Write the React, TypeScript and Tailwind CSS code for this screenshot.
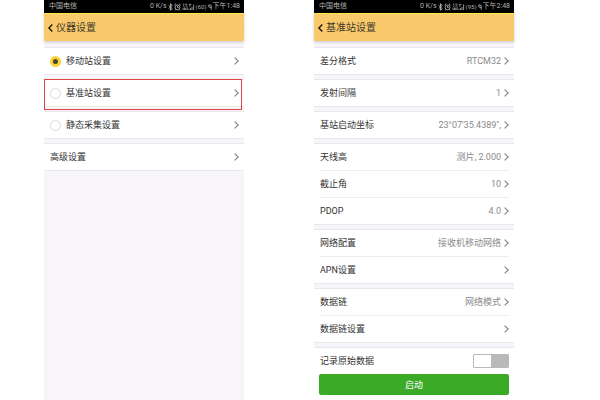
import { useState } from 'react';
import type { ReactNode } from 'react';

interface PhoneProps {
  time: string;
  battery: string;
  title: string;
  children: ReactNode;
}

interface RowProps {
  label: string;
  value?: string;
}

const MODES = ['移动站设置', '基准站设置', '静态采集设置'];

const GROUPS: RowProps[][] = [
  [{ label: '差分格式', value: 'RTCM32' }],
  [{ label: '发射间隔', value: '1' }],
  [{ label: '基站启动坐标', value: '23°07\'35.4389",' }],
  [
    { label: '天线高', value: '测片, 2.000' },
    { label: '截止角', value: '10' },
    { label: 'PDOP', value: '4.0' },
  ],
  [{ label: '网络配置', value: '接收机移动网络' }, { label: 'APN设置' }],
  [{ label: '数据链', value: '网络模式' }, { label: '数据链设置' }],
];

function Chevron() {
  return (
    <svg className="h-2 w-[5px] shrink-0" viewBox="0 0 5 8" fill="none" stroke="#7d7d7d" strokeWidth="1.1" aria-hidden="true">
      <path d="M0.6 0.6 4.3 4 0.6 7.4" />
    </svg>
  );
}

function StatusBar({ time, battery }: { time: string; battery: string }) {
  return (
    <div className="flex h-[13px] items-center justify-between bg-black pl-[5px] pr-1 text-[7px] leading-[13px] text-[#b5b5b5]">
      <span>中国电信</span>
      <div className="flex items-center gap-px whitespace-nowrap">
        <span>0 K/s</span>
        <svg className="h-2 w-[5px]" viewBox="0 0 5 8" fill="none" stroke="currentColor" strokeWidth="0.9" aria-hidden="true">
          <path d="M0.6 2.3 4.3 5.6 2.5 7.3V0.7L4.3 2.4 0.6 5.7" />
        </svg>
        <svg className="h-2 w-[7px]" viewBox="0 0 7 8" fill="none" stroke="currentColor" strokeWidth="0.9" aria-hidden="true">
          <circle cx="3.5" cy="4.4" r="2.4" />
          <path d="M3.5 3v1.5h1.2M0.5 2 2 0.8M6.5 2 5 0.8M1.8 6.4 1 7.4M5.2 6.4 6 7.4" />
        </svg>
        <svg className="h-2 w-[13px]" viewBox="0 0 13 8" fill="none" stroke="currentColor" strokeWidth="0.8" aria-hidden="true">
          <path d="M1 1.2h1.4M3.4 1.2h2M1 3h1.4M3.4 3h2M1 7V4.8M2.4 7V4.4M3.8 7V4.8M5.2 7V4.2" />
          <path d="M7 7V5.8M8.5 7V5M10 7V4M11.6 7V1.4M7 1.4h2.4M7 3h1.6" />
        </svg>
        <span className="text-[6px]">({battery})</span>
        <svg className="h-2 w-1" viewBox="0 0 4 8" fill="none" stroke="currentColor" strokeWidth="0.8" aria-hidden="true">
          <path d="M3.2 6.8V2.4L0.8 1.8V4L3.2 4.6" />
        </svg>
        <span>{time}</span>
      </div>
    </div>
  );
}

function Phone({ time, battery, title, children }: PhoneProps) {
  return (
    <section className="flex min-h-screen min-w-0 flex-1 flex-col bg-[#f7f5f9]">
      <StatusBar time={time} battery={battery} />
      <header className="flex h-7 items-center gap-[3px] border-t border-[#ffe83c] bg-[#f8ca6c] pl-1 shadow-[0_1px_3px_rgba(0,0,0,0.2)]">
        <button type="button" aria-label="返回">
          <svg className="h-2 w-[5px]" viewBox="0 0 5 8" fill="none" stroke="#1c1608" strokeWidth="1.4" aria-hidden="true">
            <path d="M4.3 0.6 0.9 4 4.3 7.4" />
          </svg>
        </button>
        <h1 className="text-[10px] leading-4 text-[#40372a]">{title}</h1>
      </header>
      <div className="flex flex-1 flex-col gap-1 pt-[6px]">{children}</div>
    </section>
  );
}

function Row({ label, value }: RowProps) {
  return (
    <button type="button" className="flex h-[26px] w-full items-center justify-between">
      <span>{label}</span>
      <span className="flex items-center gap-[3px] text-[#8a8a8a]">
        {value}
        <Chevron />
      </span>
    </button>
  );
}

export default function App() {
  const [mode, setMode] = useState(MODES[0]);

  return (
    <main className="flex min-h-screen gap-[70px] bg-white pl-11 pr-[86px] font-[Roboto,'Noto_Sans_CJK_SC',sans-serif] text-[9px] leading-3 text-[#333]">
      <Phone time="下午1:48" battery="60" title="仪器设置">
        {MODES.map((m) => (
          <div key={m} className="relative flex h-7 items-center border-y border-[#e8e7eb] bg-white pl-[6px] pr-[5px]">
            <label className="flex flex-1 items-center gap-[5px]">
              <input
                type="radio"
                name="mode"
                checked={mode === m}
                onChange={() => setMode(m)}
                className="size-[11px] appearance-none rounded-full border border-[#d9d9d9] bg-white checked:border-[3px] checked:border-[#fbd335] checked:bg-[#4a4433]"
              />
              {m}
            </label>
            <button type="button" aria-label={m}>
              <Chevron />
            </button>
            {m === '基准站设置' && (
              <span className="pointer-events-none absolute -bottom-1 -top-px left-0 right-[2px] z-10 border border-[#e0443c]" />
            )}
          </div>
        ))}
        <div className="border-y border-[#e8e7eb] bg-white pl-[6px] pr-[5px]">
          <Row label="高级设置" />
        </div>
      </Phone>

      <Phone time="下午2:48" battery="95" title="基准站设置">
        {GROUPS.map((rows) => (
          <ul key={rows[0].label} className="divide-y divide-[#ededed] border-y border-[#e8e7eb] bg-white pl-[6px] pr-[5px]">
            {rows.map((r) => (
              <li key={r.label}>
                <Row label={r.label} value={r.value} />
              </li>
            ))}
          </ul>
        ))}
        <div className="flex-1 border-t border-[#e8e7eb] bg-white px-[5px] pb-[5px]">
          <label className="flex h-[26px] items-center justify-between pl-px">
            记录原始数据
            <input
              type="checkbox"
              role="switch"
              className="h-[14px] w-9 appearance-none rounded-[1px] border border-[#b9b9b9] bg-linear-to-r from-white from-50% to-[#b9b8ba] to-50% checked:from-[#3bab27] checked:to-white"
            />
          </label>
          <button type="button" className="h-[21px] w-full rounded-[2px] bg-[#3bab27] text-white">
            启动
          </button>
        </div>
      </Phone>
    </main>
  );
}
